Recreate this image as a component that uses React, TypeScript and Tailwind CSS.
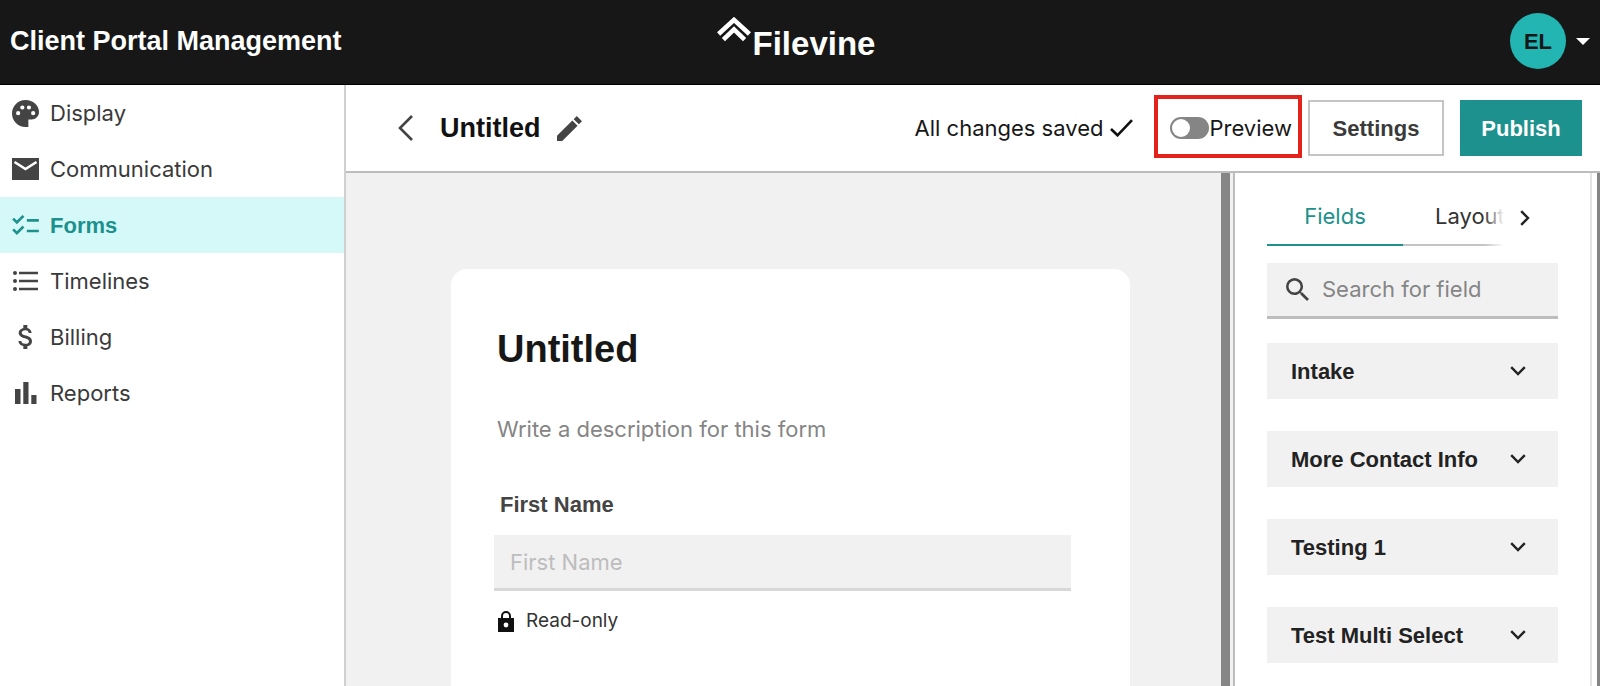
import { useState } from "react"
import type { ReactNode } from "react"

interface NavItem {
  title: string
  icon: ReactNode
}

const navItems: NavItem[] = [
  {
    title: "Display",
    icon: (
      <svg viewBox="3 3 18 18" className="h-[27px] w-[27px]" fill="currentColor" aria-hidden>
        <path d="M12 3c-4.97 0-9 4.03-9 9s4.03 9 9 9h1.9v-5H16c2.76 0 5-2.24 5-5 0-4.42-4.03-8-9-8zm-4.9 10.2a1.4 1.4 0 1 1 0-2.8 1.4 1.4 0 0 1 0 2.8zm2.8-3.8a1.4 1.4 0 1 1 0-2.8 1.4 1.4 0 0 1 0 2.8zm4.4 0a1.4 1.4 0 1 1 0-2.8 1.4 1.4 0 0 1 0 2.8zm2.8 3.8a1.4 1.4 0 1 1 0-2.8 1.4 1.4 0 0 1 0 2.8z" />
      </svg>
    ),
  },
  {
    title: "Communication",
    icon: (
      <svg viewBox="0 0 27 22" className="h-[22px] w-[27px]" fill="currentColor" aria-hidden>
        <path d="M0 0h27v22H0z" />
        <path d="M2.5 4l11 7 11-7" fill="none" stroke="#fff" strokeWidth="2.6" />
      </svg>
    ),
  },
  {
    title: "Forms",
    icon: (
      <svg viewBox="2 4 20 15" className="h-[20px] w-[27px]" fill="currentColor" aria-hidden>
        <path d="M22 7h-9v2h9V7zm0 8h-9v2h9v-2zM5.54 11L2 7.46l1.41-1.41 2.12 2.12 4.24-4.24 1.41 1.41L5.54 11zm0 8L2 15.46l1.41-1.41 2.12 2.12 4.24-4.24 1.41 1.41L5.54 19z" />
      </svg>
    ),
  },
  {
    title: "Timelines",
    icon: (
      <svg viewBox="0 0 25 20" className="h-[20px] w-[25px]" fill="currentColor" aria-hidden>
        <circle cx="2" cy="2" r="2" />
        <circle cx="2" cy="10" r="2" />
        <circle cx="2" cy="18" r="2" />
        <path d="M6 .7h19v2.6H6zM6 8.7h19v2.6H6zM6 16.7h19v2.6H6z" />
      </svg>
    ),
  },
  {
    title: "Billing",
    icon: (
      <svg viewBox="3 3 18 18" className="h-[24px] w-[24px]" fill="currentColor" aria-hidden>
        <path d="M11.8 10.9c-2.27-.59-3-1.2-3-2.15 0-1.09 1.01-1.85 2.7-1.85 1.78 0 2.44.85 2.5 2.1h2.21c-.07-1.72-1.12-3.3-3.21-3.81V3h-3v2.16c-1.94.42-3.5 1.68-3.5 3.61 0 2.31 1.91 3.46 4.7 4.13 2.5.6 3 1.48 3 2.41 0 .69-.49 1.79-2.7 1.79-2.06 0-2.87-.92-2.98-2.1h-2.2c.12 2.19 1.76 3.42 3.68 3.83V21h3v-2.15c1.95-.37 3.5-1.5 3.5-3.55 0-2.84-2.43-3.81-4.7-4.4z" />
      </svg>
    ),
  },
  {
    title: "Reports",
    icon: (
      <svg viewBox="0 0 22 22" className="h-[22px] w-[22px]" fill="currentColor" aria-hidden>
        <path d="M0 7h5.5v15H0zM8.3 0h5.2v22H8.3zM16.3 13h5.2v9h-5.2z" />
      </svg>
    ),
  },
]

const fieldGroups = ["Intake", "More Contact Info", "Testing 1", "Test Multi Select"]

function Logo() {
  return (
    <a href="#" className="flex items-center gap-[2px] pr-2 text-white">
      <svg viewBox="0 0 34 25" className="mb-[24px] h-[25px] w-[34px]" aria-hidden>
        <path
          d="M1.6 17L17 2.9l15.4 14.1M6.4 22.6L17 12.4l10.6 10.2"
          fill="none"
          stroke="currentColor"
          strokeWidth="4.6"
        />
      </svg>
      <span className="mt-[6px] text-[33px] font-bold leading-[38px]">Filevine</span>
    </a>
  )
}

function SiteHeader() {
  return (
    <header className="grid h-[85px] shrink-0 grid-cols-[1fr_auto_1fr] items-center border-b border-black bg-[#171717] px-[10px] pb-[2px]">
      <h1 className="text-[27px] font-bold leading-[32px] text-white">
        Client Portal Management
      </h1>
      <Logo />
      <button
        type="button"
        aria-label="Account menu"
        className="flex items-center gap-[10px] justify-self-end"
      >
        <span className="flex h-14 w-14 items-center justify-center rounded-full bg-[#22b5b2] text-[22px] font-bold text-[#171717]">
          EL
        </span>
        <svg viewBox="0 0 14 7" className="h-[7px] w-[14px]" fill="#fff" aria-hidden>
          <path d="M0 0h14L7 7z" />
        </svg>
      </button>
    </header>
  )
}

function Sidebar() {
  return (
    <nav className="w-[346px] shrink-0 border-r-2 border-[#d0d0d0] bg-white">
      {navItems.map((item) => (
        <a
          key={item.title}
          href="#"
          className={
            item.title === "Forms"
              ? "flex h-14 items-center gap-[11px] bg-[#d5f9f9] pl-3 text-[22px] font-bold text-[#1c918d]"
              : "flex h-14 items-center gap-[11px] pl-3 font-[Inter,sans-serif] text-[22px] text-[#3a3a3a]"
          }
        >
          <span className="flex w-[27px] justify-center text-[#444] in-[.font-bold]:text-[#1c918d]">
            {item.icon}
          </span>
          {item.title}
        </a>
      ))}
    </nav>
  )
}

function Toolbar() {
  const [preview, setPreview] = useState(false)

  return (
    <div className="flex h-[88px] shrink-0 items-center border-b-2 border-[#bdbdbd] bg-white pl-[52px] pr-[18px]">
      <button type="button" aria-label="Back">
        <svg viewBox="0 0 16 26" className="h-[26px] w-[16px]" fill="none" aria-hidden>
          <path d="M14 1L2 13l12 12" stroke="#444" strokeWidth="2.6" />
        </svg>
      </button>
      <h2 className="ml-[26px] text-[27px] font-bold leading-[32px] text-[#111]">Untitled</h2>
      <button type="button" aria-label="Rename form" className="ml-4">
        <svg viewBox="3 3 18 18" className="h-[25px] w-[25px]" fill="#444" aria-hidden>
          <path d="M3 17.25V21h3.75L17.81 9.94l-3.75-3.75L3 17.25zM21 6.75L17.25 3 15 5.25 18.75 9z" />
        </svg>
      </button>
      <div className="ml-auto flex items-center">
        <p className="flex items-center gap-[6px] font-[Inter,sans-serif] text-[22px] text-[#171717]">
          All changes saved
          <svg viewBox="0 0 23 18" className="h-[18px] w-[23px]" fill="none" aria-hidden>
            <path d="M1 10l6.5 6.3L22 1.2" stroke="#111" strokeWidth="2.6" />
          </svg>
        </p>
        <div className="mb-1 ml-[21px] flex h-[63px] items-center border-4 border-[#e3221b] pl-3 pr-[6px] pt-1">
          <label className="flex items-center gap-px font-[Inter,sans-serif] text-[22px] text-[#171717]">
            <input
              type="checkbox"
              role="switch"
              checked={preview}
              onChange={(e) => setPreview(e.target.checked)}
              className="h-[22px] w-[39px] appearance-none rounded-full bg-[#858585] p-[2px] before:block before:h-[18px] before:w-[18px] before:rounded-full before:bg-white checked:before:ml-auto"
            />
            Preview
          </label>
        </div>
        <button
          type="button"
          className="ml-[6px] h-14 w-[136px] border-2 border-[#c4c4c4] text-[22px] font-bold text-[#3a3a3a]"
        >
          Settings
        </button>
        <button
          type="button"
          className="ml-4 h-14 w-[122px] bg-[#1c918d] text-[22px] font-bold text-white"
        >
          Publish
        </button>
      </div>
    </div>
  )
}

function FormCanvas() {
  return (
    <main className="min-w-0 flex-1 overflow-hidden bg-[#f1f1f1] pl-[105px] pr-[91px] pt-24">
      <form className="h-[900px] rounded-2xl bg-white pl-[43px] pr-[59px] pt-[58px]">
        <h3 className="pl-[3px] text-[38px] font-bold leading-[44px] text-[#171717]">Untitled</h3>
        <p className="mt-[44px] pl-[3px] font-[Inter,sans-serif] text-[22px] leading-[28px] text-[#858585]">
          Write a description for this form
        </p>
        <label
          htmlFor="first-name"
          className="mt-[48px] block pl-[6px] text-[22px] font-bold leading-[28px] text-[#444]"
        >
          First Name
        </label>
        <input
          id="first-name"
          type="text"
          readOnly
          placeholder="First Name"
          className="mt-4 block h-14 w-full border-b-[3px] border-[#d8d8d8] bg-[#f1f1f1] px-4 font-[Inter,sans-serif] text-[22px] placeholder:text-[#bdbdbd]"
        />
        <p className="mt-4 flex items-center gap-3 pl-1 font-[Inter,sans-serif] text-[19px] leading-[28px] text-[#333]">
          <svg viewBox="0 0 16 21" className="h-[21px] w-[16px]" aria-hidden>
            <path d="M0 7h16v14H0z" fill="#111" />
            <path d="M4 8V5a4 4 0 0 1 8 0v3" fill="none" stroke="#111" strokeWidth="2" />
            <circle cx="8" cy="14" r="2.4" fill="#fff" />
          </svg>
          Read-only
        </p>
      </form>
    </main>
  )
}

function FieldsPanel() {
  return (
    <aside className="w-[357px] shrink-0 border-r-2 border-[#e4e4e4] bg-white px-8 pt-4">
      <div className="flex items-center">
        <div role="tablist" className="relative flex w-[237px] overflow-hidden font-[Inter,sans-serif] text-[22px]">
          <button
            type="button"
            role="tab"
            aria-selected
            className="h-[57px] w-[136px] shrink-0 border-b-2 border-[#1c918d] text-[#1c918d]"
          >
            Fields
          </button>
          <button
            type="button"
            role="tab"
            aria-selected={false}
            className="h-[57px] shrink-0 border-b-2 border-[#c4c4c4] px-8 text-[#333]"
          >
            Layout
          </button>
          <span className="absolute inset-y-0 right-0 w-5 bg-linear-to-l from-white to-transparent" />
        </div>
        <button type="button" aria-label="More tabs" className="ml-4">
          <svg viewBox="0 0 10 16" className="h-4 w-[10px]" fill="none" aria-hidden>
            <path d="M1.2 1.2L8 8l-6.8 6.8" stroke="#222" strokeWidth="2.4" />
          </svg>
        </button>
      </div>
      <label className="mt-[17px] flex h-14 items-center gap-[13px] border-b-[3px] border-[#bdbdbd] bg-[#f1f1f1] pl-[19px]">
        <svg viewBox="3 3 17.5 17.5" className="h-[23px] w-[23px] shrink-0" fill="#444" aria-hidden>
          <path d="M15.5 14h-.79l-.28-.27A6.471 6.471 0 0 0 16 9.5 6.5 6.5 0 1 0 9.5 16c1.61 0 3.09-.59 4.23-1.57l.27.28v.79l5 4.99L20.49 19l-4.99-5zm-6 0C7.01 14 5 11.99 5 9.5S7.01 5 9.5 5 14 7.01 14 9.5 11.99 14 9.5 14z" />
        </svg>
        <input
          type="search"
          aria-label="Search for field"
          placeholder="Search for field"
          className="w-full min-w-0 bg-transparent font-[Inter,sans-serif] text-[22px] placeholder:text-[#858585]"
        />
      </label>
      <div className="mt-6 flex flex-col gap-8">
        {fieldGroups.map((group) => (
          <button
            key={group}
            type="button"
            aria-expanded={false}
            className="flex h-14 items-center justify-between bg-[#f1f1f1] pl-6 pr-8 text-[22px] font-bold text-[#222]"
          >
            {group}
            <svg viewBox="0 0 16 10" className="h-[10px] w-[16px]" fill="none" aria-hidden>
              <path d="M1.2 1.2L8 8l6.8-6.8" stroke="#222" strokeWidth="2.4" />
            </svg>
          </button>
        ))}
      </div>
    </aside>
  )
}

export default function App() {
  return (
    <div className="flex h-screen flex-col overflow-hidden bg-white font-['Liberation_Sans',Arial,sans-serif]">
      <SiteHeader />
      <div className="flex min-h-0 flex-1">
        <Sidebar />
        <div className="flex min-w-0 flex-1 flex-col">
          <Toolbar />
          <div className="flex min-h-0 flex-1">
            <FormCanvas />
            <div className="w-[9px] shrink-0 bg-[#858585]" />
            <div className="w-[5px] shrink-0 border-r-2 border-[#bdbdbd] bg-[#f1f1f1]" />
            <FieldsPanel />
            <div className="ml-[5px] w-[3px] shrink-0 bg-[#858585]" />
          </div>
        </div>
      </div>
    </div>
  )
}
